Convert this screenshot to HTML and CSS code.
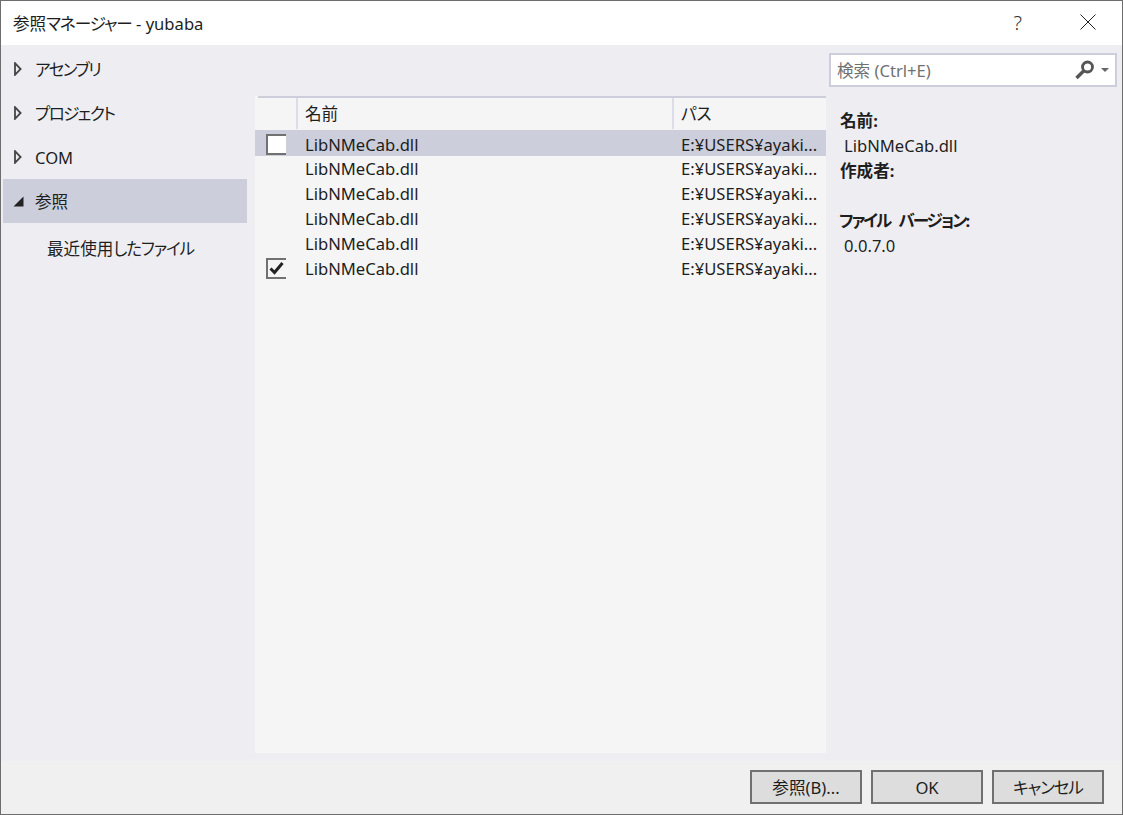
FILE: index.html
```html
<!DOCTYPE html>
<html lang="ja">
<head>
<meta charset="utf-8">
<title>参照マネージャー - yubaba</title>
<link rel="stylesheet" href="styles.css">
</head>
<body>
<div class="window">
  <header class="titlebar">
    <div class="title">参照<span class="kana">マネージャー</span> - yubaba</div>
    <div class="help">?</div>
    <svg class="close" width="16" height="16" viewBox="0 0 16 16"><path d="M0.5 0.5 15.5 15.5M15.5 0.5 0.5 15.5" stroke="#222" stroke-width="1" fill="none"/></svg>
  </header>
  <main class="main">
    <nav class="sidebar">
      <div class="nav-item"><svg class="arrow" width="8" height="14" viewBox="0 0 8 14"><path d="M1 1.2 6.6 7 1 12.8Z" fill="none" stroke="#444" stroke-width="1.8"/></svg><span class="kana-tight">アセンブリ</span></div>
      <div class="nav-item"><svg class="arrow" width="8" height="14" viewBox="0 0 8 14"><path d="M1 1.2 6.6 7 1 12.8Z" fill="none" stroke="#444" stroke-width="1.8"/></svg><span class="kana-tight">プロジェクト</span></div>
      <div class="nav-item"><svg class="arrow" width="8" height="14" viewBox="0 0 8 14"><path d="M1 1.2 6.6 7 1 12.8Z" fill="none" stroke="#444" stroke-width="1.8"/></svg><span>COM</span></div>
      <div class="nav-item selected"><svg class="arrow" width="11" height="11" viewBox="0 0 11 11"><path d="M0.5 10.5 10.5 10.5 10.5 0.5Z" fill="#222"/></svg><span>参照</span></div>
      <div class="nav-sub"><span>最近使用<span class="kana">したファイル</span></span></div>
    </nav>
    <section class="center">
      <div class="table">
        <div class="thead">
          <div class="th th-check"></div>
          <div class="th th-name">名前</div>
          <div class="th th-path">パス</div>
        </div>
        <div class="row selected"><div class="cell-check"><span class="checkbox"></span></div><div class="cell-name">LibNMeCab.dll</div><div class="cell-path">E:¥USERS¥ayaki...</div></div>
        <div class="row"><div class="cell-check"></div><div class="cell-name">LibNMeCab.dll</div><div class="cell-path">E:¥USERS¥ayaki...</div></div>
        <div class="row"><div class="cell-check"></div><div class="cell-name">LibNMeCab.dll</div><div class="cell-path">E:¥USERS¥ayaki...</div></div>
        <div class="row"><div class="cell-check"></div><div class="cell-name">LibNMeCab.dll</div><div class="cell-path">E:¥USERS¥ayaki...</div></div>
        <div class="row"><div class="cell-check"></div><div class="cell-name">LibNMeCab.dll</div><div class="cell-path">E:¥USERS¥ayaki...</div></div>
        <div class="row"><div class="cell-check"><span class="checkbox"><svg width="16" height="13" viewBox="0 0 16 13"><path d="M1.5 6.5 5.5 10.5 13.5 1" fill="none" stroke="#222" stroke-width="3"/></svg></span></div><div class="cell-name">LibNMeCab.dll</div><div class="cell-path">E:¥USERS¥ayaki...</div></div>
      </div>
    </section>
    <aside class="details">
      <div class="search">
        <span class="search-text">検索 (Ctrl+E)</span>
        <svg class="search-icon" width="20" height="20" viewBox="0 0 20 20"><circle cx="12.5" cy="7" r="5" fill="none" stroke="#555" stroke-width="2.8"/><path d="M8.6 11 1.5 18" stroke="#555" stroke-width="3.4"/></svg>
        <svg class="search-caret" width="8" height="4" viewBox="0 0 8 4"><path d="M0 0H8L4 4Z" fill="#666"/></svg>
      </div>
      <div class="info">
        <div class="label">名前:</div>
        <div class="value">LibNMeCab.dll</div>
        <div class="label">作成者:</div>
        <div class="value"></div>
        <div class="label label-kana">ファイル バージョン:</div>
        <div class="value">0.0.7.0</div>
      </div>
    </aside>
  </main>
  <footer class="footer">
    <button class="btn">参照(B)...</button>
    <button class="btn">OK</button>
    <button class="btn"><span class="kana">キャンセル</span></button>
  </footer>
</div>
</body>
</html>
```
FILE: styles.css
```css
* { box-sizing: border-box; }
html, body { margin: 0; padding: 0; }
body {
  width: 1123px;
  height: 815px;
  overflow: hidden;
  font-family: "Noto Sans", "Noto Sans CJK JP", sans-serif;
  font-size: 16.6px;
  font-feature-settings: "palt";
  color: #1e1e1e;
  background: #fff;
}
.kana { letter-spacing: -1.1px; }
.kana-tight { letter-spacing: -1.6px; }
.window {
  width: 1123px;
  height: 815px;
  border: 1px solid #6d6d6d;
  display: flex;
  flex-direction: column;
}
.titlebar {
  height: 44px;
  flex: none;
  background: #fff;
  display: flex;
  align-items: center;
  padding-left: 12px;
}
.title { flex: 1; }
.help { font-size: 20px; font-weight: 300; margin-right: 58px; color: #333; margin-top: -2px; }
.close { margin-right: 26px; margin-top: -2px; }
.main {
  flex: 1;
  min-height: 0;
  background: #eeeef2;
  display: flex;
}
.sidebar {
  width: 254px;
  flex: none;
  padding: 2px 8px 0 2px;
}
.nav-item {
  height: 44px;
  display: flex;
  align-items: center;
  position: relative;
  padding-left: 32px;
}
.nav-item.selected { background: #cccedb; }
.arrow { position: absolute; left: 11px; top: 15px; }
.nav-item.selected .arrow { left: 10px; top: 17px; }
.nav-sub { height: 50px; display: flex; align-items: center; padding-left: 44px; }
.center {
  width: 571px;
  flex: none;
  padding: 51px 0 8px;
}
.table {
  height: 100%;
  background: #f5f5f5;
}
.table::before {
  content: "";
  display: block;
  height: 2px;
  margin-left: 3px;
  background: #cccedb;
}
.thead { height: 32px; display: flex; }
.th {
  height: 31px;
  display: flex;
  align-items: center;
  padding: 0 0 2px 7px;
  border-right: 2px solid #dcdde6;
}
.th-check { width: 43px; }
.th-name { width: 376px; }
.th-path { flex: 1; border-right: 0; }
.row {
  height: 25px;
  display: flex;
  align-items: center;
}
.row.selected { background: #cccedb; height: 26px; padding-top: 2px; }
.cell-check { width: 50px; flex: none; padding-left: 11px; display: flex; }
.cell-name { width: 376px; flex: none; }
.cell-path { flex: 1; }
.checkbox {
  width: 20px;
  height: 21px;
  border: 2px solid #717171;
  border-right: 0;
  background: #f5f5f5;
  display: flex;
  align-items: center;
  justify-content: center;
  flex: none;
}
.row.selected .checkbox { background: #fff; }
.details { flex: 1; min-width: 0; padding: 8px 5px 0 3px; }
.search {
  height: 34px;
  background: #fff;
  border: 2px solid #cccedb;
  display: flex;
  align-items: center;
  padding: 0 6px;
}
.search-text { flex: 1; color: #717171; }
.search-icon { margin-right: 6px; }
.info { padding: 21px 0 0 11px; }
.label { height: 25px; line-height: 25px; font-weight: 700; }
.label-kana { letter-spacing: -2px; word-spacing: 6px; margin-left: -1px; }
.value { height: 25px; line-height: 25px; padding-left: 4px; }
.footer {
  height: 53px;
  flex: none;
  background: #f0f0f0;
  display: flex;
  justify-content: flex-end;
  gap: 9px;
  padding: 9px 18px 0 0;
}
.btn {
  width: 112px;
  height: 34px;
  background: #dddddd;
  border: 2px solid #707070;
  font: inherit;
  font-feature-settings: inherit;
  color: #1e1e1e;
  padding: 0;
}
```
